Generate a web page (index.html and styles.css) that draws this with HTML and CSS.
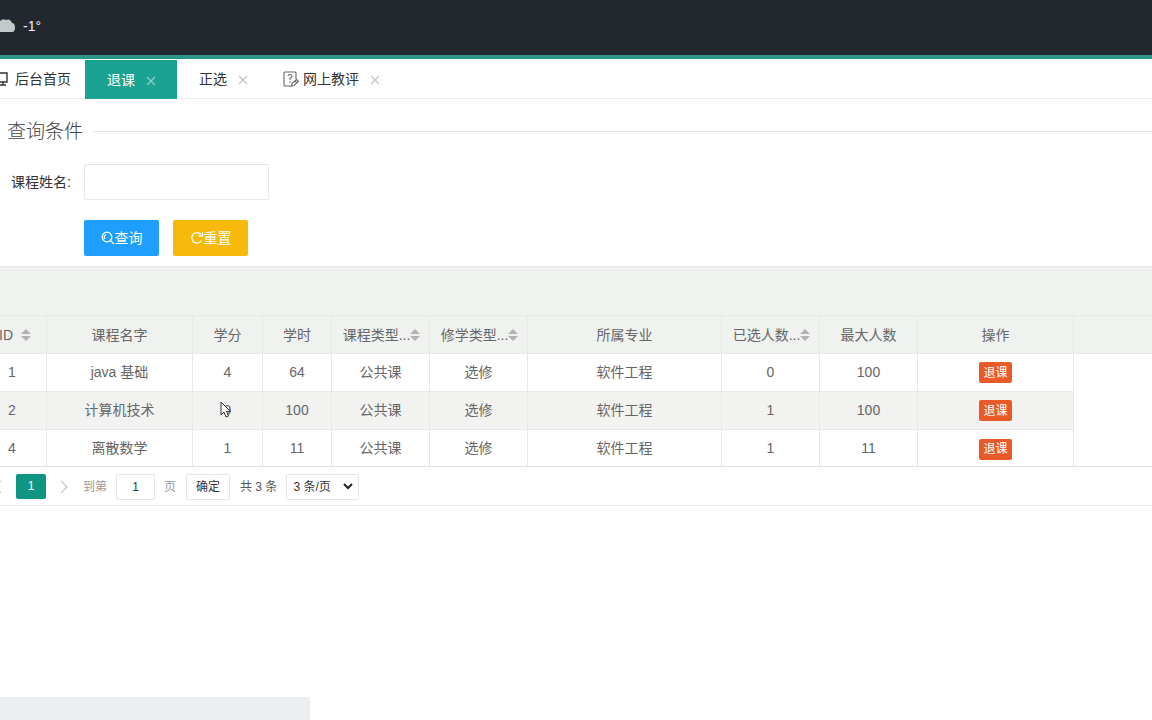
FILE: index.html
```html
<!DOCTYPE html>
<html lang="zh-CN">
<head>
<meta charset="utf-8">
<title>退课</title>
<link rel="stylesheet" href="styles.css">
</head>
<body>
<header class="topbar">
  <svg class="cloud" width="18" height="16" viewBox="0 0 18 16"><path d="M0 14V3Q3 0 6 2Q10 0 12 5Q15 5 15 9.500Q15 14 12 14Z" fill="#c3c8c8"/></svg>
  <span>-1°</span>
</header>
<nav class="tabs">
  <a class="tab home" href="#">
    <svg width="9" height="16" viewBox="0 0 9 16" fill="none" stroke="#333" stroke-width="1.4"><path d="M0 2H7V11H0M3 11V14M0 14H6"/></svg>
    <span>后台首页</span>
  </a>
  <a class="tab active" href="#"><span>退课</span><svg class="x" width="10" height="10" viewBox="0 0 10 10"><path d="M1 1L9 9M9 1L1 9"/></svg></a>
  <a class="tab" href="#"><span>正选</span><svg class="x" width="10" height="10" viewBox="0 0 10 10"><path d="M1 1L9 9M9 1L1 9"/></svg></a>
  <a class="tab review" href="#">
    <svg width="16" height="17" viewBox="0 0 16 17" fill="none" stroke="#666" stroke-width="1.1"><path d="M8 15H2Q1 15 1 14V2Q1 1 2 1H12Q13 1 13 2V8M5 5Q5 3.500 7 3.500Q9 3.500 9 5Q9 6.500 7 7.500V9M7 10.500V12"/><path d="M8.500 15L9 12.500L13.500 8.500L15.300 10.300L11 14.500ZM12 10L13.800 11.800"/></svg>
    <span>网上教评</span><svg class="x" width="10" height="10" viewBox="0 0 10 10"><path d="M1 1L9 9M9 1L1 9"/></svg>
  </a>
</nav>
<main>
  <form class="search">
    <h1 class="legend">查询条件</h1>
    <div class="field">
      <label for="course">课程姓名:</label>
      <input id="course" type="text">
    </div>
    <div class="actions">
      <button class="btn query" type="button"><svg width="14" height="14" viewBox="0 0 14 14" fill="none" stroke="currentColor" stroke-width="1.3"><circle cx="6" cy="6" r="4.800"/><path d="M9.500 9.500L13 13M3.500 8Q2.500 5 5 3.500"/></svg>查询</button>
      <button class="btn reset" type="button"><svg width="14" height="14" viewBox="0 0 14 14" fill="none" stroke="currentColor" stroke-width="1.3"><path d="M11.500 9.500A5.200 5.200 0 1 1 11 3.500M12.500 1V5H8.500"/></svg>重置</button>
    </div>
  </form>
  <div class="toolbar"></div>
  <div class="table-wrap">
    <table class="grid">
      <colgroup><col class="c-id"><col class="c-name"><col class="c-credit"><col class="c-hours"><col class="c-std"><col class="c-std"><col class="c-major"><col class="c-std"><col class="c-std"><col class="c-op"><col></colgroup>
      <thead>
        <tr>
          <th><span class="sortable wide">ID<svg class="sort" width="10" height="12" viewBox="0 0 10 12"><path d="M0 5L5 0L10 5ZM0 7H10L5 12Z"/></svg></span></th>
          <th>课程名字</th><th>学分</th><th>学时</th>
          <th><span class="sortable">课程类型...<svg class="sort" width="10" height="12" viewBox="0 0 10 12"><path d="M0 5L5 0L10 5ZM0 7H10L5 12Z"/></svg></span></th>
          <th><span class="sortable">修学类型...<svg class="sort" width="10" height="12" viewBox="0 0 10 12"><path d="M0 5L5 0L10 5ZM0 7H10L5 12Z"/></svg></span></th>
          <th>所属专业</th>
          <th><span class="sortable">已选人数...<svg class="sort" width="10" height="12" viewBox="0 0 10 12"><path d="M0 5L5 0L10 5ZM0 7H10L5 12Z"/></svg></span></th>
          <th>最大人数</th><th>操作</th><th></th>
        </tr>
      </thead>
      <tbody>
        <tr><td>1</td><td>java 基础</td><td>4</td><td>64</td><td>公共课</td><td>选修</td><td>软件工程</td><td>0</td><td>100</td><td><button class="drop" type="button">退课</button></td><td class="rest"></td></tr>
        <tr class="hover"><td>2</td><td>计算机技术</td><td>9</td><td>100</td><td>公共课</td><td>选修</td><td>软件工程</td><td>1</td><td>100</td><td><button class="drop" type="button">退课</button></td><td class="rest"></td></tr>
        <tr><td>4</td><td>离散数学</td><td>1</td><td>11</td><td>公共课</td><td>选修</td><td>软件工程</td><td>1</td><td>11</td><td><button class="drop" type="button">退课</button></td><td class="rest"></td></tr>
      </tbody>
    </table>
  </div>
  <div class="pager">
    <svg class="arrow" width="8" height="14" viewBox="0 0 8 14"><path d="M7 1L1 7L7 13"/></svg>
    <a class="current" href="#">1</a>
    <svg class="arrow" width="8" height="14" viewBox="0 0 8 14"><path d="M1 1L7 7L1 13"/></svg>
    <label class="muted goto" for="page">到第</label>
    <input id="page" type="text" value="1">
    <span class="muted">页</span>
    <button class="confirm" type="button">确定</button>
    <span class="total">共 3 条</span>
    <span class="select"><select aria-label="每页条数"><option>3 条/页</option></select><svg width="10" height="7" viewBox="0 0 10 7"><path d="M1 1L5 5L9 1" fill="none" stroke="#222" stroke-width="2"/></svg></span>
  </div>
</main>
<div class="status"></div>
<svg class="pointer" width="12" height="18" viewBox="0 0 12 18"><path d="M1 1V14L4 11L6 16L8.500 15L6.500 10.500H10.500Z" fill="#fff" stroke="#333"/></svg>
</body>
</html>
```
FILE: styles.css
```css
* { box-sizing: border-box; }
body {
  margin: 0;
  min-height: 100vh;
  display: flex;
  flex-direction: column;
  overflow-x: hidden;
  background: #fff;
  color: #333;
  font: 14px/20px "Liberation Sans", "Noto Sans CJK SC", sans-serif;
}
button, input, select { font: inherit; color: inherit; }
a { color: inherit; text-decoration: none; }

.topbar {
  display: flex;
  align-items: center;
  gap: 5px;
  height: 59px;
  padding-bottom: 4px;
  background: #23272e;
  border-bottom: 4px solid #2b9688;
  color: #f0f0f0;
}

.tabs { display: flex; height: 40px; padding-top: 1px; border-bottom: 1px solid #eee; }
.tab { display: flex; align-items: center; padding: 0 21px 0 22px; }
.tab .x { margin: 2px 0 0 11px; fill: none; stroke: #c4c4c4; stroke-width: 1.2; }
.tab.home { padding: 0 14px 0 0; gap: 6px; }
.tab.active { margin-bottom: -1px; background: #1aa293; color: #fff; }
.tab.active .x { stroke: #8fd0c8; }
.tab.review { padding-left: 14px; }
.tab.review span { margin-left: 4px; }

.legend {
  display: flex;
  align-items: center;
  gap: 10px;
  margin: 0;
  padding-left: 7px;
  font-size: 19px;
  font-weight: 300;
  line-height: 30px;
  color: #444;
}
.legend::after { content: ""; flex: 1; height: 1px; margin-bottom: 2px; background: #e8e8e8; }
.search { padding: 18px 0 10px; }
.field { display: flex; align-items: center; margin-top: 17px; }
.field label { width: 84px; padding-left: 11px; }
.field input { width: 185px; height: 36px; padding: 0 10px; border: 1px solid #e8e8e8; border-radius: 2px; background: #fff; }
.actions { display: flex; gap: 14px; margin: 20px 0 0 84px; }
.btn {
  display: flex;
  align-items: center;
  justify-content: center;
  width: 75px;
  height: 36px;
  padding: 0;
  border: 0;
  border-radius: 2px;
  color: #fff;
}
.query { background: #1e9fff; }
.reset { background: #f7b90b; }

.toolbar { height: 50px; background: #f0f2ef; border-top: 1px solid #e8eae7; border-bottom: 1px solid #e8eae7; }
.table-wrap { margin-left: -22px; border-bottom: 1px solid #e3e5e2; }
.grid { width: 100%; table-layout: fixed; border-collapse: separate; border-spacing: 0; color: #666; text-align: center; }
.c-id { width: 69px; }
.c-name { width: 146px; }
.c-credit { width: 70px; }
.c-hours { width: 69px; }
.c-std { width: 98px; }
.c-major { width: 194px; }
.c-op { width: 156px; }
.grid th, .grid td { height: 38px; padding: 0; border: 1px solid #e6e9e5; border-width: 0 1px 1px 0; font-weight: 400; white-space: nowrap; }
.grid th { background: #f0f2ef; }
.grid td { padding-bottom: 2px; }
.grid tbody tr:last-child td { height: 36px; padding-bottom: 0; border-bottom: 0; }
.grid .hover td { background: #f2f2f0; }
.grid td.rest, .grid tr.hover td.rest { background: #fff; border: 0; }
.grid th:last-child { border-right: 0; }
.sortable { display: flex; align-items: center; justify-content: center; padding-left: 2px; }
.sortable.wide { gap: 8px; padding-left: 6px; }
.sort { fill: #b2b2b2; flex: none; }
.drop {
  display: block;
  width: 33px;
  height: 21px;
  margin: 2px auto 0;
  padding: 0;
  border: 0;
  border-radius: 2px;
  background: #e85b29;
  color: #fff;
  font-size: 12px;
  line-height: 20px;
}

.pager { display: flex; align-items: center; height: 39px; padding-top: 1px; border-bottom: 1px solid #eee; font-size: 12px; }
.arrow { fill: none; stroke: #c8c8c8; stroke-width: 1.3; margin-left: -6px; }
.current { width: 30px; height: 25px; margin: 0 14px; border-radius: 2px; background: #109583; color: #fff; line-height: 25px; text-align: center; }
.current + .arrow { margin-left: 0; }
.muted { color: #999; }
.goto { margin-left: 15px; }
.pager input { width: 39px; height: 26px; margin: 0 9px; padding: 0; border: 1px solid #e6e6e6; border-radius: 2px; text-align: center; }
.confirm { width: 44px; height: 26px; margin: 0 10px; padding: 0; border: 1px solid #e6e6e6; border-radius: 2px; background: #fff; }
.total { color: #555; }
.select { display: grid; align-items: center; margin-left: 9px; }
.select select { grid-area: 1 / 1; width: 73px; height: 26px; padding: 0 6px; border: 1px solid #e6e6e6; border-radius: 2px; background: #fff; appearance: none; }
.select svg { grid-area: 1 / 1; justify-self: end; margin-right: 6px; pointer-events: none; }

.status { width: 310px; height: 23px; margin-top: auto; background: #eceef1; border-top: 1px solid #e8eced; border-radius: 0 3px 0 0; }
.pointer { position: absolute; left: 220px; top: 401px; pointer-events: none; }
```
